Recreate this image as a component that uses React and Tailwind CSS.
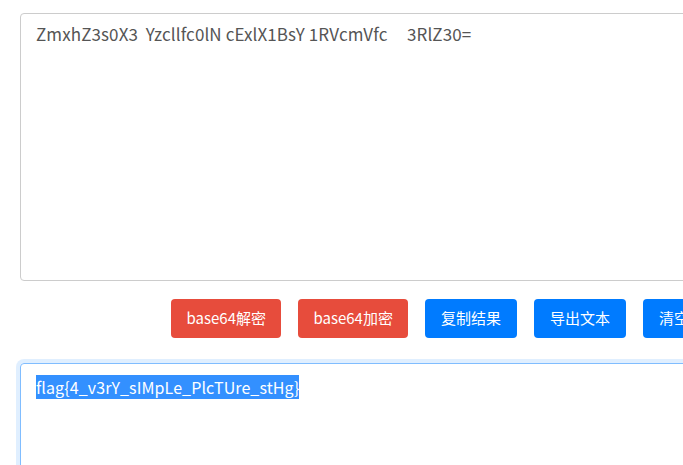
import React from "react";

const font = { fontFamily: '"Noto Sans CJK SC", "Liberation Sans", sans-serif' };

// Page body: input box, action buttons, result box
export default function App() {
  const buttons = [
    { label: "base64解密", color: "bg-[#e74c3c] px-[15.5px]" },
    { label: "base64加密", color: "bg-[#e74c3c] px-[15px]" },
    { label: "复制结果", color: "bg-[#007bff] px-4" },
    { label: "导出文本", color: "bg-[#007bff] px-4" },
    { label: "清空", color: "bg-[#007bff] px-4" },
  ];

  return (
    <div className="w-[683px] h-[465px] overflow-hidden bg-white" style={font}>
      <div className="w-[1000px] pl-5 pt-[13px]">
        <div className="h-[268px] rounded-[4px] border border-[#cccccc] px-[15px] pt-[8px] text-[17px] leading-6 tracking-[0.1px] text-[#555555] whitespace-pre">
          {"ZmxhZ3s0X3  Yzcllfc0lN cExlX1BsY 1RVcmVfc     3RlZ30="}
        </div>

        <div className="flex gap-[17px] pl-[151px] pt-[18px]">
          {buttons.map((b) => (
            <button
              key={b.label}
              className={`h-[39px] shrink-0 rounded-[4px] text-[15px] text-white ${b.color}`}
            >
              {b.label}
            </button>
          ))}
        </div>

        <div className="mt-[25px] h-[200px] rounded-[4px] border border-[#80bdff] px-[15px] pt-[11px] text-[16px] leading-6 tracking-[0.1px] text-[#555555] shadow-[0_0_0_4px_rgba(0,123,255,0.12)]">
          <span className="bg-[#3390ff] text-white">flag{"{"}4_v3rY_sIMpLe_PlcTUre_stHg{"}"}</span>
        </div>
      </div>
    </div>
  );
}
